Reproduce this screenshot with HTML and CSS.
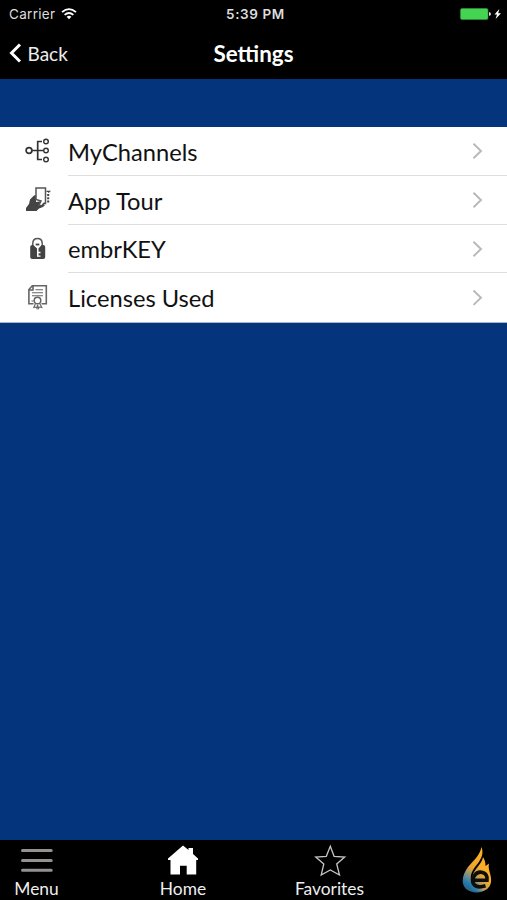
FILE: index.html
```html
<!DOCTYPE html>
<html lang="en">
<head>
<meta charset="utf-8">
<title>Settings</title>
<link rel="stylesheet" href="styles.css">
</head>
<body>
<div class="screen">
  <header class="header">
    <div class="status">
      <div class="carrier"><span class="carrier-name">Carrier</span>
        <svg class="wifi" width="16" height="12" viewBox="0 0 16 12" fill="none" stroke="#fff" stroke-width="1.8"><path d="M1 4.2Q8-2 15 4.2M3.6 6.9Q8 3 12.4 6.9"/><path d="M5.6 8.8Q8 6.8 10.4 8.8L8 11.3Z" fill="#fff" stroke="none"/></svg>
      </div>
      <div class="time">5:39 PM</div>
      <div class="power">
        <svg width="42" height="12" viewBox="0 0 42 12"><rect x=".5" y=".5" width="27.5" height="11" rx="1.5" fill="#43d551" stroke="#3a9145" stroke-width=".6"/><path d="M29 4q2 .3 2 2t-2 2z" fill="#ddd"/><path d="M39.3 1L34.5 6.6H37L35.6 11 41 5.2H38.2Z" fill="#fff"/></svg>
      </div>
    </div>
    <nav class="navbar">
      <div class="back"><svg width="13" height="20" viewBox="0 0 13 20" fill="none" stroke="#fff" stroke-width="3"><path d="M11 1.5 2.5 10 11 18.5"/></svg><span class="back-label">Back</span></div>
      <h1 class="title">Settings</h1>
      <div></div>
    </nav>
  </header>
  <main class="content">
    <div class="list">
      <div class="row">
        <div class="icon"><svg width="26" height="26" viewBox="0 0 26 26" fill="none" stroke="#333" stroke-width="1.4"><circle cx="4" cy="12.5" r="2.9" stroke-width="1.7"/><path d="M7 12.5H18M17 3.5H12.7V21.5H17" stroke-width="1.7"/><circle cx="21" cy="3.5" r="2.3"/><circle cx="21" cy="12.5" r="2.3"/><circle cx="21" cy="21.5" r="2.3"/></svg></div>
        <div class="cell"><span class="label">MyChannels</span><svg class="chevron" width="11" height="17" viewBox="0 0 11 17"><path d="M1.5 1.8 9 9 1.5 16.2"/></svg></div>
      </div>
      <div class="row">
        <div class="icon"><svg width="26" height="26" viewBox="0 0 26 26"><path d="M1 24V21L4 17 5 12.5 9 8.5 11 8V15L17 14 16 18H20L18 20 14 21.5 11.5 24Z" fill="#444"/><path d="M11 1H20.5V16.5H18.5L17.5 19 14 18.3 16 14 11 12.5Z" fill="#fff" stroke="#555" stroke-width="1.5"/><path d="M13.5 15.5 11 19.5M20 16 15 20" stroke="#444" stroke-width="1.3"/><path d="M21.5 4.3H24.5L23.3 5.5" fill="none" stroke="#444" stroke-width="1.3"/><path d="M23.2 7V17" stroke="#444" stroke-width="2" stroke-dasharray="2 1.3"/></svg></div>
        <div class="cell"><span class="label">App Tour</span><svg class="chevron" width="11" height="17" viewBox="0 0 11 17"><path d="M1.5 1.8 9 9 1.5 16.2"/></svg></div>
      </div>
      <div class="row">
        <div class="icon"><svg width="26" height="26" viewBox="0 0 26 26"><path d="M7.8 11V7.2Q8 2.6 12.5 2.6T17.2 7.2V11" fill="none" stroke="#555" stroke-width="1.5"/><rect x="5.2" y="9" width="15" height="14" rx="2" fill="#444"/><path d="M8.8 7.4Q12.5 3.8 16.2 7.4V9.5L13.5 12.5V20.8H12V12.5L8.8 9.5Z" fill="#fff"/><path d="M10.7 8.5H14.3" stroke="#444" stroke-width="1.8"/><path d="M12.7 16.5H15.5M12.7 20.2H15.5" stroke="#fff" stroke-width="1.3"/></svg></div>
        <div class="cell"><span class="label">embrKEY</span><svg class="chevron" width="11" height="17" viewBox="0 0 11 17"><path d="M1.5 1.8 9 9 1.5 16.2"/></svg></div>
      </div>
      <div class="row">
        <div class="icon"><svg width="26" height="26" viewBox="0 0 26 26" fill="none" stroke="#666" stroke-width="1.1"><path d="M8.5 18.7H3.9V4.5L7.3 .8H21.3V18.7H16.5M3.9 5H8V.8" stroke-width="1.6"/><path d="M10.5 4.8H18M7 7.8H18M7 10.7H18M6.5 16H8.5"/><circle cx="12.5" cy="15.5" r="3.3" fill="#fff" stroke-width="1.5"/><path d="M10.5 18.5 8.8 22.5 11 22 12 23.5 12.5 19.7 13.5 23.5 14.5 22 16.8 22.5 14.7 18.5"/></svg></div>
        <div class="cell"><span class="label label-last">Licenses Used</span><svg class="chevron" width="11" height="17" viewBox="0 0 11 17"><path d="M1.5 1.5 9 8.7 1.5 15.9"/></svg></div>
      </div>
    </div>
  </main>
  <footer class="tabs">
    <div class="tab"><svg width="34" height="34" viewBox="0 0 34 34"><path d="M2.5 6.5H31.2M2.5 16.5H31.2M2.5 26.3H31.2" stroke="#959191" stroke-width="3" stroke-linecap="round"/></svg><span>Menu</span></div>
    <div class="tab"><svg width="34" height="34" viewBox="0 0 34 34"><path d="M2 14.5 17 1.5 22.5 6V4H27V10L32 14.5V16H30.2V30.5H20.7V21.7H14V30.5H4.5V16H2Z" fill="#fff"/></svg><span>Home</span></div>
    <div class="tab"><svg width="34" height="34" viewBox="0 0 34 34"><path d="M17.3 2.2 21.1 12.3 31.7 13 23.7 20 26.5 31 17.3 26 8.2 31 10.8 20 2.7 13 13.3 12.3Z" fill="none" stroke="#c8c5c2" stroke-width="1.3"/></svg><span>Favorites</span></div>
    <div class="tab tab-brand"><svg width="32" height="48" viewBox="0 0 32 48"><defs><linearGradient id="flame" x1=".65" y1="0" x2=".35" y2="1"><stop offset="0" stop-color="#ffb51f"/><stop offset=".48" stop-color="#eea42b"/><stop offset=".7" stop-color="#78908b"/><stop offset=".85" stop-color="#237bb0"/><stop offset="1" stop-color="#315e7c"/></linearGradient><linearGradient id="ember" x1="1" y1="0" x2="0" y2="1"><stop offset=".4" stop-color="#f8ae27"/><stop offset=".65" stop-color="#b79b5c"/><stop offset=".85" stop-color="#237bb0"/></linearGradient></defs><path d="M20.5 0C23.5 8 19 14 14 20 9 27 9 31 11 38 14 43 21 44 26 40 22 47 11 47 5 42-1 36 2 27 7 20 13 13 19 8 20.5 0Z" fill="url(#flame)"/><path d="M11.5 29C13 22 21 17 22 10 24 13 24.5 16 24.5 19L28 16.5C26.5 23 31 28 30 35 29 43 20 47 12 43 8 39 9 34 11.5 29Z" fill="url(#ember)"/><path d="M13 33.3H26C27 24.5 17.5 23 13.5 28.5 9 35 13 42.5 24.5 38.8" fill="none" stroke="#100d08" stroke-width="3.6"/></svg></div>
  </footer>
</div>
</body>
</html>
```
FILE: styles.css
```css
* { box-sizing: border-box; }
body { margin: 0; font-family: Lato, sans-serif; }
svg { display: block; flex: none; }
.screen { width: 507px; height: 900px; display: flex; flex-direction: column; background: #04347c; overflow: hidden; }
.header { height: 79px; flex: none; background: #000; color: #fff; }
.status { height: 27px; display: grid; grid-template-columns: 1fr auto 1fr; align-items: center; padding: 0 5px 0 9px; font: 13.5px Inter, sans-serif; color: #ddd; }
.carrier { display: flex; align-items: center; gap: 6px; }
.carrier-name { letter-spacing: .3px; }
.time { font-weight: 600; font-size: 13.5px; letter-spacing: .6px; }
.power { justify-self: end; }
.navbar { height: 52px; display: grid; grid-template-columns: 1fr auto 1fr; align-items: center; padding: 0 9px; }
.back { display: flex; align-items: center; gap: 5.5px; font-size: 19px; color: #eee; }
.title { margin: 0; font-size: 22.4px; font-weight: 700; line-height: 28px; padding-top: 1px; }
.content { flex: 1; padding-top: 48px; }
.list { height: 196px; background: #fff; display: grid; grid-template-rows: repeat(4, 1fr); border-bottom: 1px solid #a7bad4; }
.row { display: flex; padding-left: 25px; }
.icon { width: 43px; display: flex; align-items: center; }
.cell { flex: 1; display: flex; align-items: center; justify-content: space-between; padding-right: 24px; border-bottom: 1px solid #dedede; }
.row:last-child .cell { border-bottom: 0; }
.label { font-size: 23.7px; line-height: 28px; padding-top: 2px; color: #111; }
.label-last { padding-top: 0; }
.chevron { fill: none; stroke: #b8b8b8; stroke-width: 1.9; }
.tabs { height: 60px; flex: none; background: #000; display: flex; gap: 73.5px; color: #eee; font-size: 17.4px; line-height: 20px; padding-top: 4px; }
.tab { width: 73px; flex: none; display: flex; flex-direction: column; align-items: center; gap: 1px; }
.tab-brand { width: 67.5px; padding: 3px 0 0 8px; }
```
